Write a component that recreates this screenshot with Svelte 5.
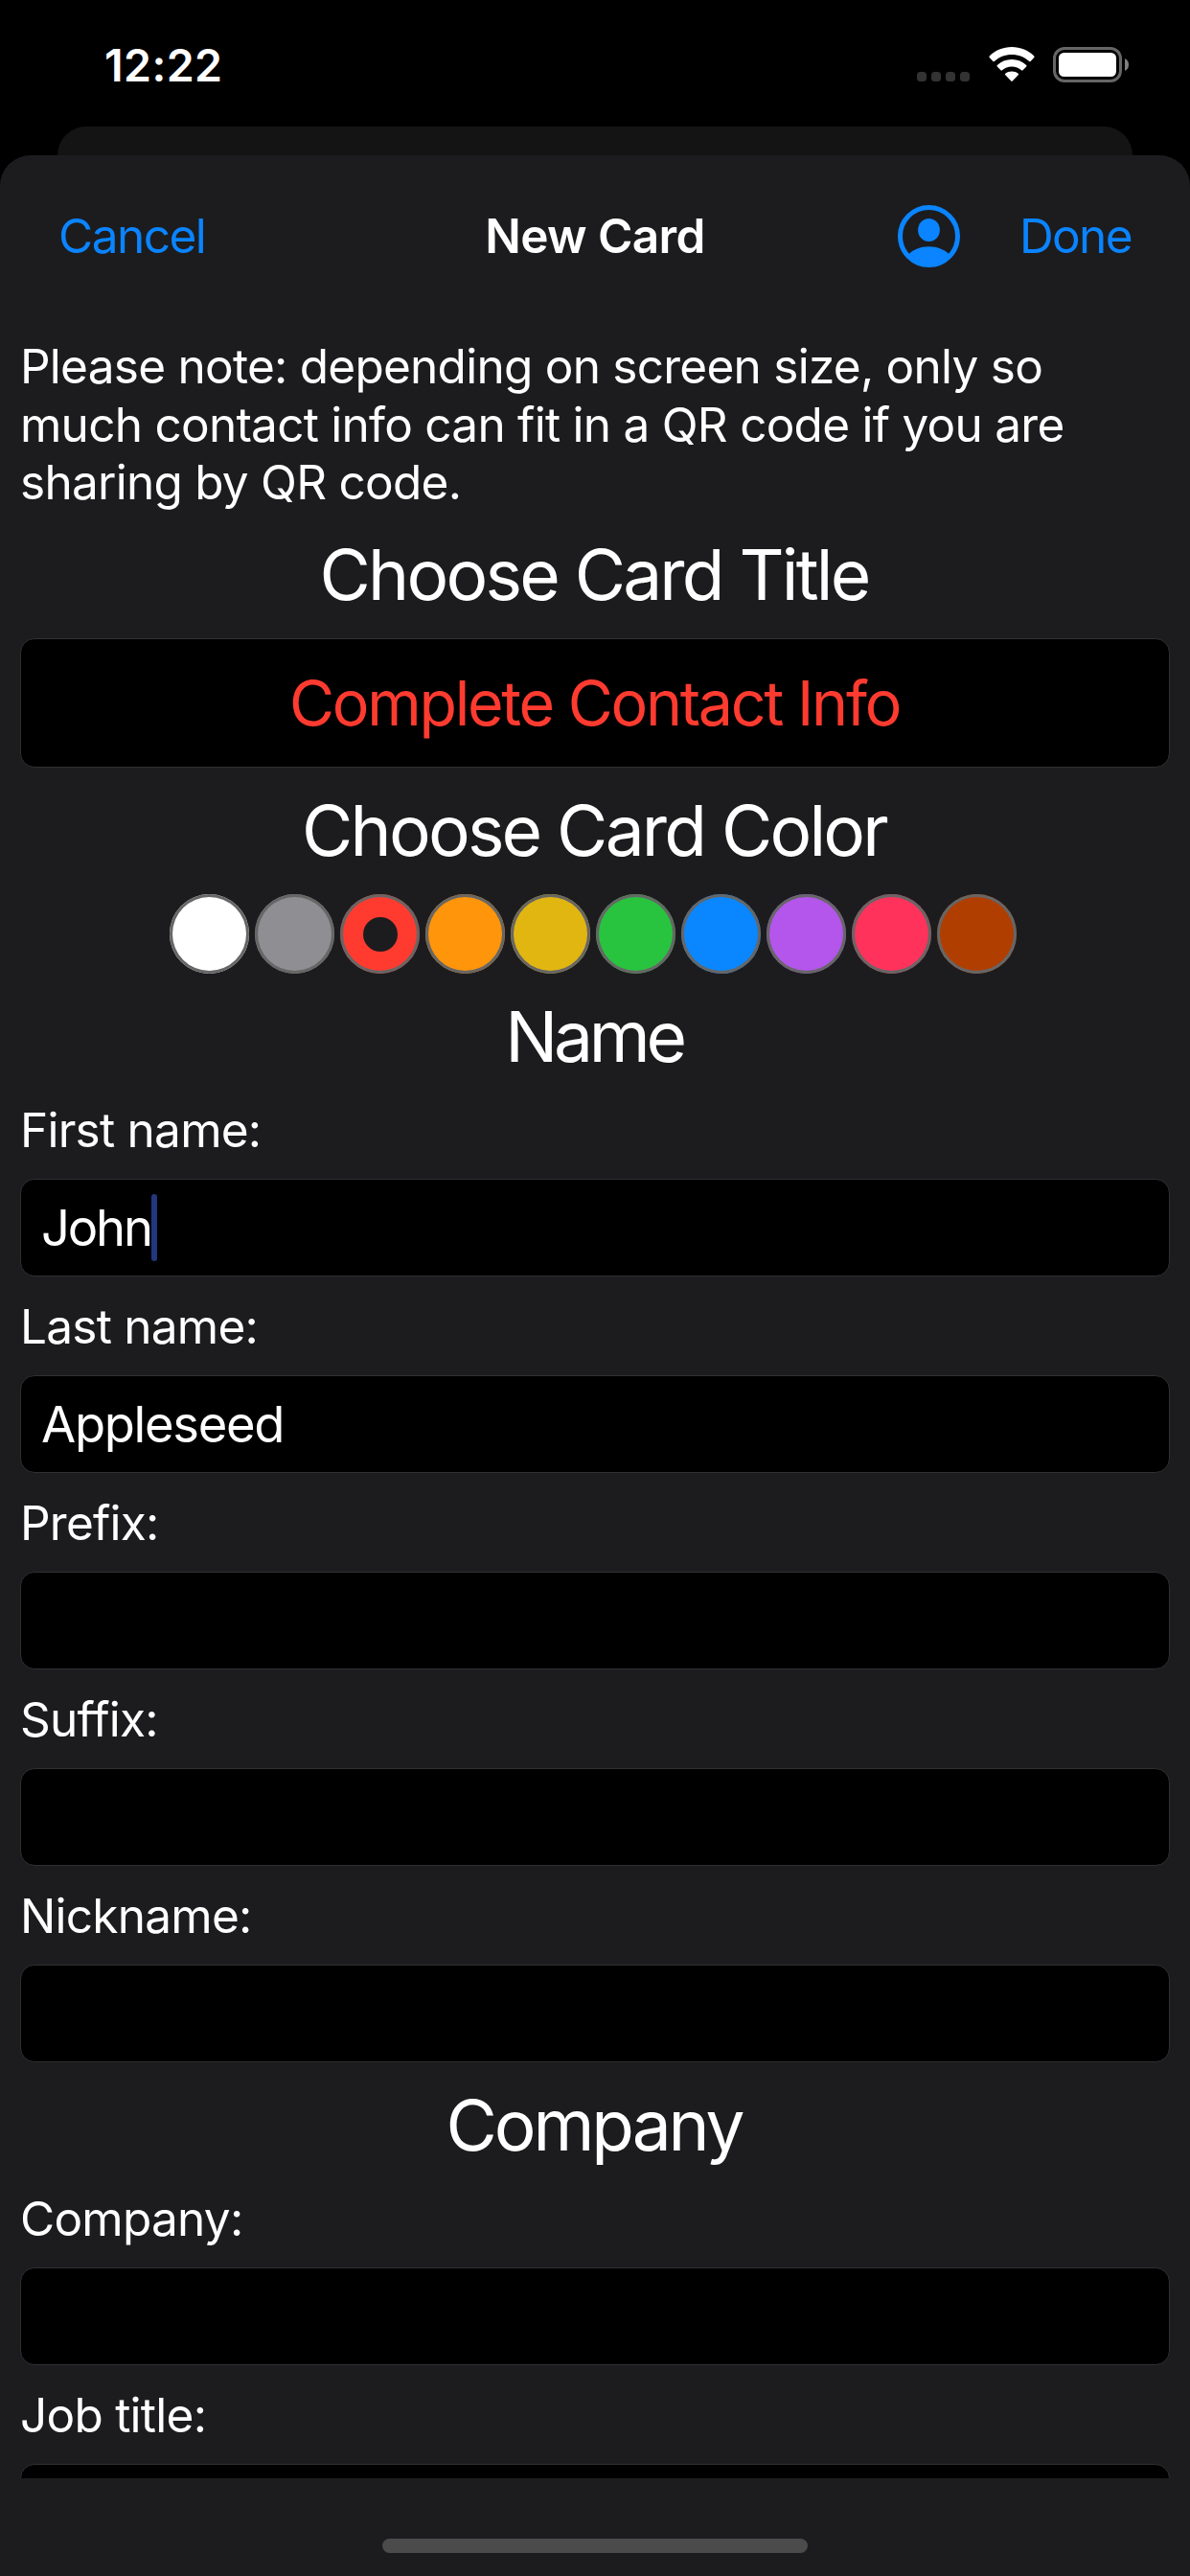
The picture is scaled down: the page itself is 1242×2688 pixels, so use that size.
<script>
  const swatches = [
    { name: 'white', color: '#ffffff' },
    { name: 'gray', color: '#8e8e93' },
    { name: 'red', color: '#ff3b30' },
    { name: 'orange', color: '#ff950a' },
    { name: 'yellow', color: '#e2b611' },
    { name: 'green', color: '#28c43f' },
    { name: 'blue', color: '#0a87ff' },
    { name: 'purple', color: '#b455eb' },
    { name: 'pink', color: '#ff325b' },
    { name: 'brown', color: '#b03e00' }
  ];
  const selected = 'red';

  const nameFields = [
    { label: 'First name:', value: 'John', focused: true },
    { label: 'Last name:', value: 'Appleseed' },
    { label: 'Prefix:', value: '' },
    { label: 'Suffix:', value: '' },
    { label: 'Nickname:', value: '' }
  ];
  const companyFields = [
    { label: 'Company:', value: '' },
    { label: 'Job title:', value: '' }
  ];
</script>

{#snippet field(item)}
  <div class="row">
    <div class="label">{item.label}</div>
    <div class="input" class:focused={item.focused}>
      <span>{item.value}</span>{#if item.focused}<i class="caret"></i>{/if}
    </div>
  </div>
{/snippet}

<div class="screen">
  <div class="status">
    <span class="time">12:22</span>
    <div class="indicators">
      <div class="cell"><i></i><i></i><i></i><i></i></div>
      <svg class="wifi" width="48" height="37" viewBox="0 0 48 37">
        <path d="M24 0C33 0 41.300 3.500 47.300 9.500Q48 10.200 47.300 10.900L43.600 14.900Q42.900 15.600 42.200 14.900C37.200 10.400 31 7.900 24 7.900S10.800 10.400 5.800 14.900Q5.100 15.600 4.400 14.900L.7 10.900Q0 10.200 .7 9.500C6.700 3.500 15 0 24 0Z" />
        <path d="M24 13C29.900 13 35.200 15.200 39.200 19Q39.900 19.700 39.200 20.400L35.500 24.300Q34.800 25 34.100 24.300C31.300 22 27.900 20.600 24 20.600S16.700 22 13.900 24.300Q13.200 25 12.500 24.300L8.800 20.400Q8.100 19.700 8.800 19C12.800 15.200 18.100 13 24 13Z" />
        <path d="M24 25.500C26.600 25.500 28.900 26.300 30.700 27.800Q31.400 28.500 30.700 29.200L24.700 35.600Q24 36.300 23.300 35.600L17.300 29.200Q16.600 28.500 17.300 27.800C19.100 26.300 21.400 25.500 24 25.500Z" />
      </svg>
      <svg class="battery" width="79" height="37" viewBox="0 0 79 37">
        <rect x="1.500" y="1.500" width="69" height="34" rx="10.500" fill="none" stroke="#666" stroke-width="3" />
        <rect x="6" y="6" width="60" height="25" rx="5.500" fill="#fff" />
        <path d="M75 12Q79 14 79 18.500T75 25Z" fill="#808080" />
      </svg>
    </div>
  </div>

  <div class="behind"></div>

  <div class="sheet">
    <header>
      <span class="cancel">Cancel</span>
      <h1>New Card</h1>
      <div class="actions">
        <svg width="65" height="65" viewBox="0 0 65 65">
          <defs>
            <clipPath id="disc"><circle cx="32.500" cy="32.500" r="31" /></clipPath>
          </defs>
          <circle cx="32.500" cy="32.500" r="30" fill="none" stroke="#0a84ff" stroke-width="5" />
          <ellipse cx="32.500" cy="26" rx="11.400" ry="12.100" fill="#0a84ff" />
          <path clip-path="url(#disc)" d="M11 51.500C16 46.500 24 43.300 32.500 43.300S49 46.500 54 51.500V65H11Z" fill="#0a84ff" />
        </svg>
        <span class="done">Done</span>
      </div>
    </header>

    <main>
      <p class="note">Please note: depending on screen size, only so<br />much contact info can fit in a QR code if you are<br />sharing by QR code.</p>

      <h2>Choose Card Title</h2>
      <div class="title-field">Complete Contact Info</div>

      <h2>Choose Card Color</h2>
      <div class="swatches">
        {#each swatches as s (s.name)}
          <div class="swatch" style="background: {s.color}">
            {#if s.name === selected}<i></i>{/if}
          </div>
        {/each}
      </div>

      <h2 class="name">Name</h2>
      <div class="rows">
        {#each nameFields as item (item.label)}{@render field(item)}{/each}
      </div>

      <h2 class="company">Company</h2>
      <div class="rows">
        {#each companyFields as item (item.label)}{@render field(item)}{/each}
      </div>
    </main>

    <footer><div class="home"></div></footer>
  </div>
</div>

<style>
  :global(body) {
    margin: 0;
    background: #000;
  }
  .screen {
    display: flex;
    flex-direction: column;
    width: 1242px;
    height: 2688px;
    overflow: hidden;
    background: #000;
    color: #fff;
    font-family: Inter, 'Liberation Sans', sans-serif;
    font-size: 49.5px;
  }
  .status {
    display: flex;
    flex: none;
    justify-content: space-between;
    height: 132px;
    padding: 0 64px 0 109px;
    box-sizing: border-box;
  }
  .time {
    margin-top: 38px;
    font-size: 46.5px;
    font-weight: 600;
    line-height: 60px;
    letter-spacing: 0.4px;
  }
  .indicators {
    display: flex;
    align-items: flex-end;
    height: 86px;
  }
  .cell {
    display: flex;
    gap: 5px;
    margin: 0 20px 1px 0;
  }
  .cell i {
    width: 10px;
    height: 10px;
    border-radius: 3.5px;
    background: #333;
  }
  .wifi {
    margin-right: 19px;
    fill: #fff;
  }
  .behind {
    flex: none;
    height: 30px;
    margin: 0 60px;
    border-radius: 30px 30px 0 0;
    background: #141414;
  }
  .sheet {
    display: flex;
    flex: 1;
    flex-direction: column;
    min-height: 0;
    border-radius: 32px 32px 0 0;
    background: #1c1c1e;
  }
  header {
    display: grid;
    flex: none;
    grid-template-columns: 1fr auto 1fr;
    align-items: center;
    height: 168px;
    padding: 0 60px;
    line-height: 60px;
    color: #0a84ff;
  }
  .cancel {
    padding-left: 1px;
    letter-spacing: -1.5px;
  }
  .done {
    margin-right: 1px;
    letter-spacing: -1.6px;
  }
  h1 {
    margin: 0;
    font-size: 49.5px;
    font-weight: 600;
    letter-spacing: -0.6px;
    color: #fff;
  }
  .actions {
    display: flex;
    align-items: center;
    justify-content: flex-end;
    gap: 62px;
  }
  main {
    flex: none;
    height: 2256px;
    padding: 22px 21px 0;
    box-sizing: border-box;
    overflow: hidden;
  }
  .note {
    margin: 0;
    height: 182px;
    line-height: 60.5px;
    letter-spacing: -0.74px;
    white-space: nowrap;
  }
  h2 {
    margin: 20px 0;
    padding-right: 2px;
    font-size: 73px;
    font-weight: 400;
    line-height: 92px;
    letter-spacing: -2.8px;
    text-align: center;
  }
  .name {
    letter-spacing: -4.3px;
  }
  .company {
    letter-spacing: -3.1px;
  }
  .title-field {
    height: 135px;
    padding-right: 1px;
    box-sizing: border-box;
    border: 1px solid #303032;
    border-radius: 15px;
    background: #000;
    color: #ff3b30;
    font-size: 64.5px;
    line-height: 134px;
    letter-spacing: -2.28px;
    text-align: center;
  }
  .swatches {
    display: flex;
    justify-content: center;
    gap: 6px;
    padding-right: 4px;
  }
  .swatch {
    display: flex;
    align-items: center;
    justify-content: center;
    width: 83px;
    height: 83px;
    border-radius: 50%;
    box-shadow: inset 0 0 0 3px #666;
  }
  .swatch i {
    width: 36px;
    height: 36px;
    border-radius: 50%;
    background: #1c1c1e;
  }
  .rows {
    display: flex;
    flex-direction: column;
    gap: 21px;
  }
  .label {
    height: 63px;
    margin-bottom: 19px;
    line-height: 63px;
    letter-spacing: -0.75px;
  }
  .input {
    display: flex;
    align-items: center;
    height: 102px;
    padding: 0 21px;
    box-sizing: border-box;
    border: 1px solid #303032;
    border-radius: 15px;
    background: #000;
    font-size: 52.5px;
    line-height: 100px;
    letter-spacing: -1.3px;
  }
  .focused {
    letter-spacing: -2.2px;
  }
  .caret {
    width: 6px;
    height: 70px;
    border-radius: 3px;
    background: #22377e;
  }
  footer {
    display: flex;
    flex: 1;
    align-items: flex-end;
    justify-content: center;
    padding-bottom: 24px;
  }
  .home {
    width: 444px;
    height: 15px;
    border-radius: 7.5px;
    background: #4b4b4c;
  }
</style>
